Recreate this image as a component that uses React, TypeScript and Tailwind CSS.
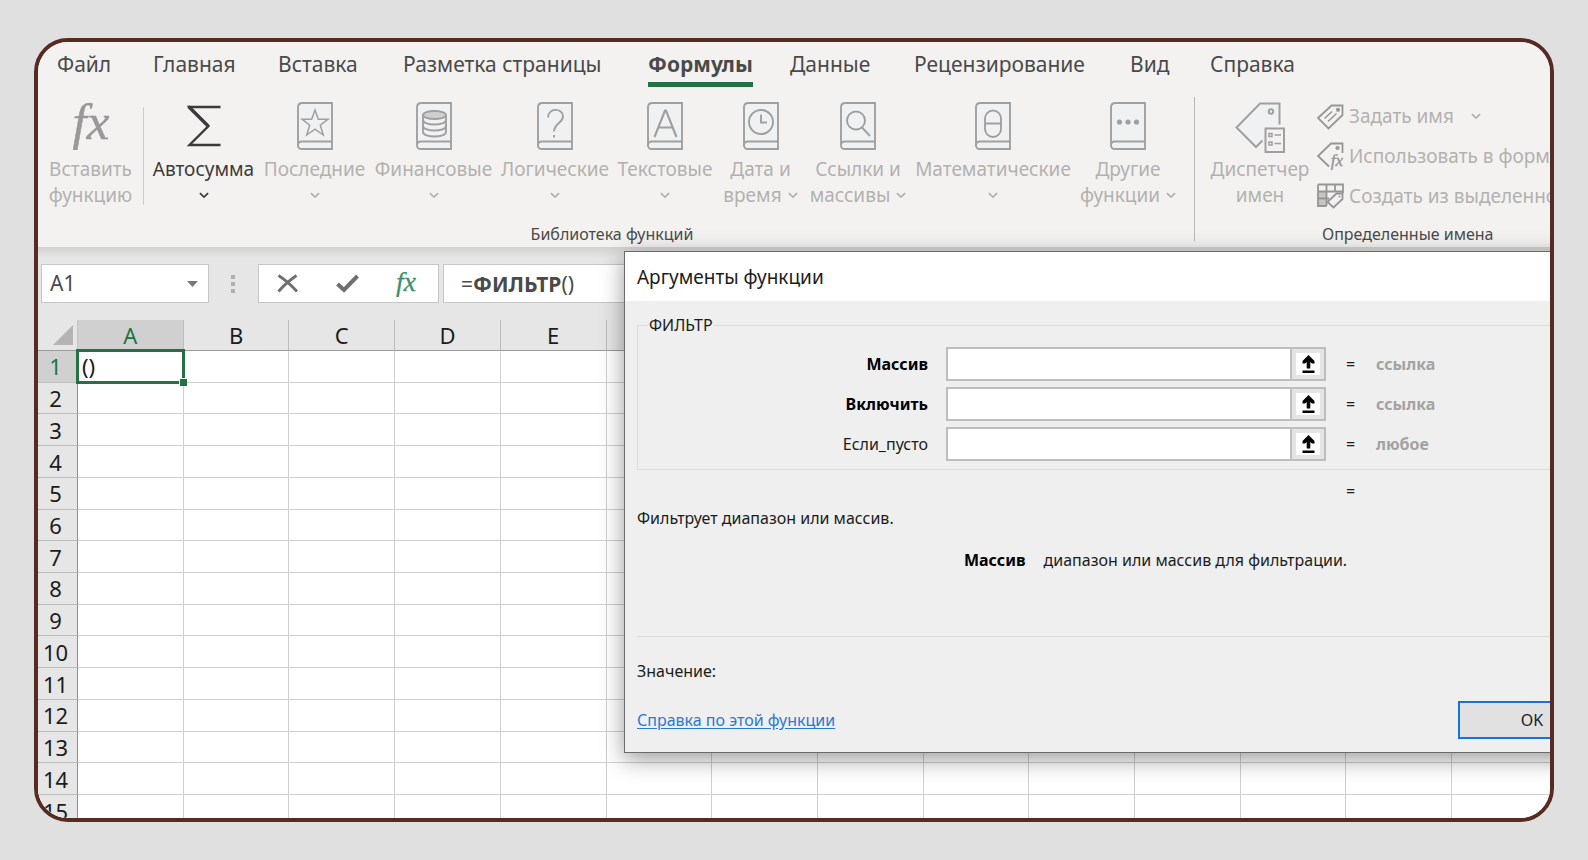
import { useState, type ReactNode } from "react";

type LibraryItem = {
  lines: string[];
  width: string;
  icon: ReactNode;
  active?: boolean;
};

const TABS = [
  { label: "Файл", width: "w-[96px]" },
  { label: "Главная", width: "w-[125px]" },
  { label: "Вставка", width: "w-[125px]" },
  { label: "Разметка страницы", width: "w-[245px]" },
  { label: "Формулы", width: "w-[142px]" },
  { label: "Данные", width: "w-[124px]" },
  { label: "Рецензирование", width: "w-[216px]" },
  { label: "Вид", width: "w-[80px]" },
  { label: "Справка", width: "w-[100px]" },
];

const COLUMNS = ["A", "B", "C", "D", "E", "F", "G", "H", "I", "J", "K", "L", "M", "N"];
const ROWS = Array.from({ length: 15 }, (_, i) => i + 1);

const ARGUMENTS = [
  { id: "array", label: "Массив", hint: "ссылка", required: true },
  { id: "include", label: "Включить", hint: "ссылка", required: true },
  { id: "if-empty", label: "Если_пусто", hint: "любое", required: false },
];

function Chevron() {
  return (
    <svg width="10" height="7" viewBox="0 0 11 7" fill="none" stroke="currentColor" strokeWidth="1.9" aria-hidden="true">
      <path d="M1 1l4.500 4.300L10 1" />
    </svg>
  );
}

function Book({ children }: { children: ReactNode }) {
  return (
    <svg width="36" height="48" viewBox="0 0 36 48" fill="none" stroke="#a0a0a0" strokeWidth="1.9" aria-hidden="true">
      <path d="M1 43V5.500Q1 1 5.500 1H35V39.500H5Q1 39.500 1 43.200Q1 47 5 47H35V39.500" fill="#f0f1f2" />
      {children}
    </svg>
  );
}

function FxIcon({ className, size }: { className: string; size: number }) {
  return (
    <svg width={size} height={size} viewBox="0 0 48 48" className={className} fill="currentColor" stroke="currentColor" aria-hidden="true">
      <text x="24" y="37" textAnchor="middle" strokeWidth="0.5" className="font-['Liberation_Serif',serif] text-[51px] italic">
        fx
      </text>
    </svg>
  );
}

function SigmaIcon() {
  return (
    <svg width="36" height="48" viewBox="0 0 36 48" fill="none" stroke="#3b3b3b" strokeWidth="2.400" aria-hidden="true">
      <path d="M34.500 5H3.500L22.500 24L3.500 43H34.500" />
      <path d="M2.500 4.500L22 24" strokeWidth="3.200" />
    </svg>
  );
}

function NameManagerIcon() {
  return (
    <svg width="50" height="51" viewBox="0 0 50 51" fill="none" stroke="#a0a0a0" strokeWidth="2" aria-hidden="true">
      <path d="M44.500 22.500V1.500H25L1.500 25.500L21 45L27.500 38.500" fill="#f0f1f2" />
      <circle cx="36" cy="9.500" r="2.200" />
      <path d="M30.500 26.500H49V50H30.500Z" fill="#f3f2f1" />
      <path d="M34 31.500H37V34.500H34ZM34 40H37V43H34ZM39.500 33H46M39.500 41.500H46" strokeWidth="1.500" />
    </svg>
  );
}

function TagIcon() {
  return (
    <svg width="27" height="26" viewBox="0 0 27 26" fill="none" stroke="#969696" strokeWidth="1.800" aria-hidden="true">
      <path d="M1 14L14.500 1.500H25.500V11L11.500 24.500Z" />
      <circle cx="21" cy="5.800" r="1.200" />
      <path d="M7.500 14.500L15 7.500M11 17.500L19.500 9.500" strokeWidth="1.500" />
    </svg>
  );
}

function TagFxIcon() {
  return (
    <svg width="27" height="28" viewBox="0 0 27 28" fill="none" stroke="#969696" strokeWidth="1.800" aria-hidden="true">
      <path d="M12 24.500L1 14L14 1.500H25.500V11" />
      <circle cx="20.500" cy="6" r="1.200" />
      <text x="20" y="24" textAnchor="middle" fill="#969696" strokeWidth="0.4" className="font-['Liberation_Serif',serif] text-[17px] italic">
        fx
      </text>
    </svg>
  );
}

function TableTagIcon() {
  return (
    <svg width="27" height="26" viewBox="0 0 27 26" fill="none" stroke="#969696" strokeWidth="1.800" aria-hidden="true">
      <path d="M1 8H9V23H1Z" fill="#c4c4c4" stroke="none" />
      <path d="M1 1.500H26V10M1 1.500V23H9.500M1 8.500H26M1 15.500H12M9.500 1.500V23M18 1.500V8.500" />
      <path d="M10.500 19L19.500 10.500H25.500V16L16.500 24.500Z" fill="#f3f2f1" />
      <circle cx="22.500" cy="13.500" r="1" fill="#969696" stroke="none" />
    </svg>
  );
}

const LIBRARY: LibraryItem[] = [
  { lines: ["Автосумма"], width: "w-[111px]", icon: <SigmaIcon />, active: true },
  {
    lines: ["Последние"],
    width: "w-[111px]",
    icon: (
      <Book>
        <path d="M18 8L21.300 17.200H31L23.300 23.200L26.300 33L18 27.200L9.700 33L12.700 23.200L5 17.200H14.700Z" strokeWidth="1.500" />
      </Book>
    ),
  },
  {
    lines: ["Финансовые"],
    width: "w-[127px]",
    icon: (
      <Book>
        <path d="M7 13V30C7 36 30 36 30 30V13" />
        <ellipse cx="18.500" cy="13" rx="11.500" ry="4" fill="#cfcfcf" />
        <path d="M7 18C7 24 30 24 30 18M7 24C7 30 30 30 30 24" />
      </Book>
    ),
  },
  {
    lines: ["Логические"],
    width: "w-[116px]",
    icon: (
      <Book>
        <path d="M11 15.500C11 5.500 26 5.500 26 14.500C26 21 17.500 20.500 17 29.500M17 33V35.500" />
      </Book>
    ),
  },
  {
    lines: ["Текстовые"],
    width: "w-[104px]",
    icon: (
      <Book>
        <path d="M7.500 35L18 8.500H19L29.500 35M11.500 25.500H25.500" strokeWidth="2.200" />
      </Book>
    ),
  },
  {
    lines: ["Дата и", "время"],
    width: "w-[87px]",
    icon: (
      <Book>
        <circle cx="18" cy="20" r="12" />
        <path d="M18 12.500V20.500H24" />
      </Book>
    ),
  },
  {
    lines: ["Ссылки и", "массивы"],
    width: "w-[108px]",
    icon: (
      <Book>
        <circle cx="16" cy="18.500" r="9" />
        <path d="M22 25.500L30 34" />
      </Book>
    ),
  },
  {
    lines: ["Математические"],
    width: "w-[162px]",
    icon: (
      <Book>
        <rect x="10" y="8.500" width="16" height="26.500" rx="8" />
        <path d="M10 21.500H26" />
      </Book>
    ),
  },
  {
    lines: ["Другие", "функции"],
    width: "w-[108px]",
    icon: (
      <Book>
        <g fill="#a0a0a0" stroke="none">
          <circle cx="9.500" cy="20" r="2.600" />
          <circle cx="18" cy="20" r="2.600" />
          <circle cx="26.500" cy="20" r="2.600" />
        </g>
      </Book>
    ),
  },
];

function LibraryButton({ item }: { item: LibraryItem }) {
  const [first, second] = item.lines;
  return (
    <button
      type="button"
      className={`flex shrink-0 flex-col items-center whitespace-nowrap text-[19px] leading-[26px] ${item.width} ${
        item.active ? "text-[#3b3b3b]" : "text-[#b3b1af]"
      }`}
    >
      <span className="mb-1.5 flex h-12">{item.icon}</span>
      <span>{first}</span>
      <span className="flex h-[26px] items-center gap-1.5">
        {second}
        <Chevron />
      </span>
    </button>
  );
}

function Ribbon() {
  return (
    <header className="flex h-[205px] flex-col bg-[#f3f2f1]">
      <nav className="flex h-[55px] shrink-0 pl-[19px]">
        {TABS.map((tab) => (
          <div key={tab.label} className={`flex shrink-0 items-start pt-2 ${tab.width}`}>
            <button
              type="button"
              className={`h-[37px] whitespace-nowrap border-b-[5px] pb-1 text-[21px] leading-7 text-[#4a4a4a] ${
                tab.label === "Формулы" ? "border-[#217346] font-bold" : "border-transparent"
              }`}
            >
              {tab.label}
            </button>
          </div>
        ))}
      </nav>

      <div className="flex grow">
        <section className="flex shrink-0 flex-col">
          <div className="flex h-[124px] pt-[5px]">
            <button type="button" className="flex w-[105px] flex-col items-center text-[19px] leading-[26px] text-[#b3b1af]">
              <span className="mb-1.5 flex h-12">
                <FxIcon size={48} className="text-[#999]" />
              </span>
              <span>Вставить</span>
              <span>функцию</span>
            </button>
            <div className="mr-1 mt-[5px] h-[98px] w-px bg-[#cfcdcb]" />
            {LIBRARY.map((item) => (
              <LibraryButton key={item.lines[0]} item={item} />
            ))}
          </div>
          <h2 className="pl-1 text-center text-[16px] leading-[26px] text-[#4a4a4a]">Библиотека функций</h2>
        </section>

        <div className="ml-3 h-[144px] w-px shrink-0 bg-[#b9b7b5]" />

        <section className="flex shrink-0 flex-col">
          <div className="flex h-[124px]">
            <button type="button" className="flex w-[122px] flex-col items-center pl-2 pt-[5px] text-[19px] leading-[26px] text-[#b3b1af]">
              <span className="mb-1.5 flex h-12">
                <NameManagerIcon />
              </span>
              <span>Диспетчер</span>
              <span>имен</span>
            </button>
            <div className="flex flex-col text-[19px] text-[#b3b1af]">
              <button type="button" className="flex h-[39px] items-center gap-[5px] whitespace-nowrap">
                <TagIcon />
                Задать имя
                <span className="pl-3">
                  <Chevron />
                </span>
              </button>
              <button type="button" className="flex h-10 items-center gap-[5px] whitespace-nowrap">
                <TagFxIcon />
                Использовать в формуле
              </button>
              <button type="button" className="flex h-10 items-center gap-[5px] whitespace-nowrap">
                <TableTagIcon />
                Создать из выделенного
              </button>
            </div>
          </div>
          <h2 className="pl-[127px] text-[16px] leading-[26px] text-[#4a4a4a]">Определенные имена</h2>
        </section>
      </div>
    </header>
  );
}

function FormulaBar() {
  return (
    <div className="flex h-[73px] bg-[#e6e6e6] bg-linear-to-b from-[#d2d2d0] to-[#e6e6e6] to-15% pl-[3px] pt-[17px]">
      <div className="flex h-[39px] w-[168px] items-center border border-[#c6c6c6] bg-white">
        <input
          aria-label="Имя"
          defaultValue="A1"
          className="w-full min-w-0 bg-transparent pl-2 text-[21px] text-[#4a4a4a] outline-none"
        />
        <button type="button" aria-label="Список имен" className="px-2.5">
          <svg width="11" height="6" viewBox="0 0 11 6" fill="#777" aria-hidden="true">
            <path d="M0 0H11L5.500 6Z" />
          </svg>
        </button>
      </div>
      <div className="flex h-[39px] w-12 flex-col items-center justify-center gap-[3px]">
        <span className="size-1 bg-[#b0b0b0]" />
        <span className="size-1 bg-[#b0b0b0]" />
        <span className="size-1 bg-[#b0b0b0]" />
      </div>
      <div className="ml-px flex h-[39px] w-[181px] items-center border border-[#c6c6c6] bg-white">
        <button type="button" aria-label="Отмена" className="flex w-14 justify-center">
          <svg width="21" height="19" viewBox="0 0 21 19" fill="none" stroke="#6f6f6f" aria-hidden="true">
            <path d="M1.500 1.500C7 5 14 11 20 17.500" strokeWidth="2.800" />
            <path d="M19.500 1.500C13 6 7 11 1.500 17.500" strokeWidth="2.800" />
          </svg>
        </button>
        <button type="button" aria-label="Ввод" className="flex w-16 justify-center">
          <svg width="23" height="19" viewBox="0 0 23 19" fill="none" stroke="#6f6f6f" strokeWidth="4" aria-hidden="true">
            <path d="M1.500 10L8 16L21.500 2" />
          </svg>
        </button>
        <button type="button" aria-label="Вставить функцию" className="flex w-[54px] justify-center">
          <FxIcon size={26} className="text-[#3f9068]" />
        </button>
      </div>
      <div
        role="textbox"
        aria-label="Строка формул"
        contentEditable
        suppressContentEditableWarning
        className="ml-1 h-[39px] grow border border-[#c6c6c6] bg-white pl-[17px] text-[21px] leading-[38px] text-[#4a4a4a] outline-none"
      >
        =<b>ФИЛЬТР</b>()
      </div>
    </div>
  );
}

function Sheet() {
  return (
    <table className="h-[507px] w-[calc(100%+8px)] table-fixed border-separate border-spacing-0 bg-white text-[22px] leading-6 text-[#1c1c1c]">
      <thead>
        <tr className="h-[31px]">
          <th className="w-10 border-b border-r border-[#9b9b9b] border-r-[#c4c4c4] bg-[#e6e6e6] p-0">
            <svg width="20" height="20" viewBox="0 0 20 20" className="ml-[15px]" fill="#b4b4b4" aria-hidden="true">
              <path d="M20 0V20H0Z" />
            </svg>
          </th>
          {COLUMNS.map((col) => (
            <th
              key={col}
              scope="col"
              className={`border-b border-r border-[#9b9b9b] border-r-[#bdbdbd] p-0 font-normal ${
                col === "A" ? "bg-[#d0d0d0] text-[#217346]" : "bg-[#e6e6e6]"
              }`}
            >
              {col}
            </th>
          ))}
        </tr>
      </thead>
      <tbody>
        {ROWS.map((row) => (
          <tr key={row}>
            <th
              scope="row"
              className={`border-b border-r border-[#bdbdbd] border-r-[#8f8f8f] p-0 pr-1 font-normal ${
                row === 1 ? "bg-[#d0d0d0] text-[#217346]" : "bg-[#e6e6e6]"
              }`}
            >
              {row}
            </th>
            {COLUMNS.map((col) =>
              row === 1 && col === "A" ? (
                <td key={col} className="relative border-b border-r border-[#cfcfcf] p-0 pl-1">
                  ()
                  <span className="absolute -inset-0.5 border-[3px] border-[#217346]" />
                  <span className="absolute -bottom-1 -right-1 size-2 border-l border-t border-white bg-[#217346]" />
                </td>
              ) : (
                <td key={col} className="border-b border-r border-[#cfcfcf] p-0" />
              ),
            )}
          </tr>
        ))}
      </tbody>
    </table>
  );
}

function FunctionArgumentsDialog() {
  const [values, setValues] = useState<Record<string, string>>({});

  return (
    <div
      role="dialog"
      aria-labelledby="dialog-title"
      className="absolute -right-[60px] left-[586px] top-[209px] border border-[#6b6b6b] bg-[#efefef] text-[16px] leading-6 text-[#1c1c1c] shadow-[0_6px_22px_rgba(0,0,0,0.4)]"
    >
      <h1 id="dialog-title" className="h-[49px] bg-white pl-3 text-[19px] leading-[50px]">
        Аргументы функции
      </h1>

      <div className="pl-3 pt-3">
        <fieldset className="border border-[#dcdcdc] pb-2">
          <legend className="ml-2.5 px-px">ФИЛЬТР</legend>
          <div className="flex flex-col gap-[5px] pt-[9px]">
            {ARGUMENTS.map((arg) => (
              <div key={arg.id} className="flex h-[35px] items-center">
                <label htmlFor={arg.id} className={`w-[290px] text-right ${arg.required ? "font-bold text-black" : ""}`}>
                  {arg.label}
                </label>
                <div className="ml-[18px] flex h-[34px] w-[380px] border-2 border-[#bdbdbd] bg-white">
                  <input
                    id={arg.id}
                    value={values[arg.id] ?? ""}
                    onChange={(e) => setValues((prev) => ({ ...prev, [arg.id]: e.target.value }))}
                    className="min-w-0 grow px-2 outline-none"
                  />
                  <button
                    type="button"
                    aria-label={`Выбрать диапазон: ${arg.label}`}
                    className="flex w-[34px] items-center justify-center border-l-2 border-[#bdbdbd] bg-[#e4e4e4]"
                  >
                    <span className="flex h-[22px] w-6 items-center justify-center bg-white">
                      <svg width="13" height="18" viewBox="0 0 13 18" fill="#000" aria-hidden="true">
                        <path d="M6.500 0L12.500 6V8.500H10L8.300 7V13.500H4.700V7L3 8.500H0.500V6ZM0.500 15.500H12.500V18H0.500Z" />
                      </svg>
                    </span>
                  </button>
                </div>
                <span className="ml-5 w-[30px]">=</span>
                <span className="font-bold text-[#a3a3a3]">{arg.hint}</span>
              </div>
            ))}
          </div>
        </fieldset>

        <div className="pl-[709px] pt-[9px]">=</div>
        <p className="pt-[3px]">Фильтрует диапазон или массив.</p>
        <p className="flex gap-[18px] pl-[327px] pt-[18px]">
          <b className="text-black">Массив</b>
          <span>диапазон или массив для фильтрации.</span>
        </p>
        <hr className="mt-16 border-[#dcdcdc]" />
        <p className="pt-[22px]">Значение:</p>
      </div>

      <div className="flex items-center justify-between pb-[13px] pl-3 pr-[3px] pt-[18px]">
        <a href="#help" className="text-[#2a7ad4] underline underline-offset-2">
          Справка по этой функции
        </a>
        <button type="button" className="h-[38px] w-[148px] border-2 border-[#0f78d0] bg-[#e1e1e1]">
          OK
        </button>
      </div>
    </div>
  );
}

export default function App() {
  return (
    <div className="min-h-screen bg-[#e0e0e0] px-[34px] py-[38px] font-['Noto_Sans','Open_Sans',sans-serif]">
      <main className="relative h-[784px] overflow-hidden rounded-[34px] border-4 border-[#552b22] bg-[#e6e6e6]">
        <Ribbon />
        <FormulaBar />
        <Sheet />
        <FunctionArgumentsDialog />
      </main>
    </div>
  );
}
